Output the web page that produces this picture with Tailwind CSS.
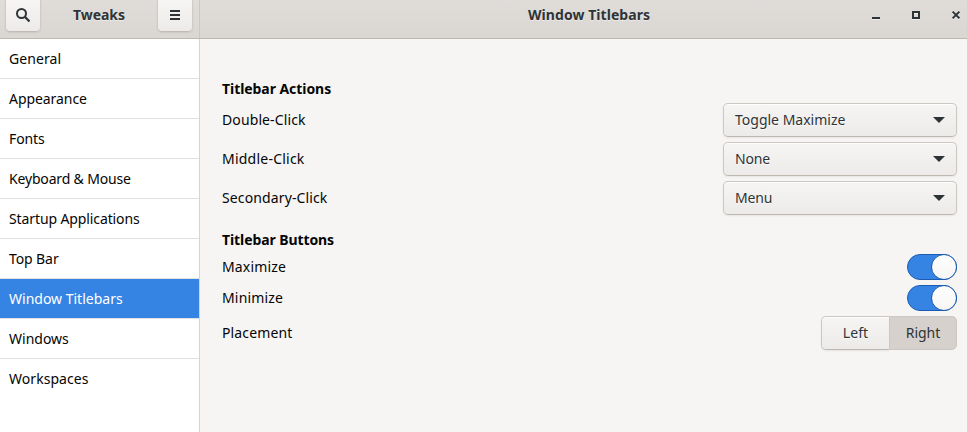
<!DOCTYPE html>
<html lang="en">
<head>
<meta charset="utf-8">
<title>Tweaks</title>
<script src="https://cdn.jsdelivr.net/npm/@tailwindcss/browser@4"></script>
</head>
<body class="w-[967px] h-[432px] overflow-hidden flex flex-col bg-[#f6f5f4] text-[14px] leading-5 text-[#050505] font-['Noto_Sans',sans-serif]">
<header class="flex h-[39px] shrink-0 border-b border-[#bfb8b1] bg-linear-to-b from-[#e0dcd9] to-[#dad6d2] text-[#2e3436] font-bold [text-shadow:0_1px_#ffffff80]">
  <div class="w-[200px] flex justify-between border-r border-[#cdc7c2] pl-[5px] pr-[6px]">
    <button class="-mt-[3px] w-[36px] h-[35px] rounded-[5px] border border-[#d0cbc7] border-b-[#c1bab4] bg-linear-to-b from-[#f7f6f5] to-[#edebe9] shadow-[0_1px_2px_#00000012] flex items-center justify-center">
      <svg class="mt-px" width="16" height="16" viewBox="0 0 16 16" fill="none" stroke="#2e3436" stroke-width="2"><circle cx="6.5" cy="6.5" r="4.5"/><path d="M9.8 9.8 14.5 14.5" stroke-width="2.3"/></svg>
    </button>
    <h1 class="mt-[5px] tracking-[-0.04px]">Tweaks</h1>
    <button class="-mt-[3px] w-[36px] h-[35px] rounded-[5px] border border-[#d0cbc7] border-b-[#c1bab4] bg-linear-to-b from-[#f7f6f5] to-[#edebe9] shadow-[0_1px_2px_#00000012] flex items-center justify-center">
      <svg class="mt-px" width="16" height="16" viewBox="0 0 16 16" fill="#2e3436" shape-rendering="crispEdges"><path d="M3 3h10v2H3zM3 7h10v2H3zM3 11h10v2H3z"/></svg>
    </button>
  </div>
  <div class="flex-1 flex">
    <h2 class="ml-[328px] mt-[5px] w-[336px] tracking-[0.06px] whitespace-nowrap">Window Titlebars</h2>
    <div class="mt-[7px] flex gap-6 [filter:drop-shadow(0_1px_0_#ffffff90)]">
      <svg width="16" height="16" viewBox="0 0 16 16" fill="#2e3436"><path d="M8 10h8v2H8z"/></svg>
      <svg width="16" height="16" viewBox="0 0 16 16" fill="none" stroke="#2e3436" stroke-width="2"><path d="M9 5h6v6H9z"/></svg>
      <svg width="16" height="16" viewBox="0 0 16 16" fill="none" stroke="#2e3436" stroke-width="2"><path d="M8.6 4.6 15.4 11.4M15.4 4.6 8.6 11.4"/></svg>
    </div>
  </div>
</header>
<div class="flex flex-1">
  <nav class="w-[200px] shrink-0 bg-white border-r border-[#d8d4d0] whitespace-nowrap *:h-10 *:pl-[9px] *:pt-[10px] *:border-b *:border-[#e1e1e1]">
    <div class="tracking-[0.08px]">General</div>
    <div class="tracking-[-0.06px]">Appearance</div>
    <div class="tracking-[-0.1px]">Fonts</div>
    <div class="tracking-[-0.17px]">Keyboard &amp; Mouse</div>
    <div class="tracking-[-0.11px]">Startup Applications</div>
    <div class="tracking-[-0.1px]">Top Bar</div>
    <div class="bg-[#3584e4] text-white">Window Titlebars</div>
    <div>Windows</div>
    <div class="tracking-[0.05px] border-b-0!">Workspaces</div>
  </nav>
  <main class="flex-1 pl-[22px] pr-[10px] pt-10">
    <h3 class="font-bold tracking-[-0.06px] h-6">Titlebar Actions</h3>
    <div class="flex flex-col gap-[5px]">
      <div class="flex justify-between h-[34px]">
        <span class="mt-[7px] tracking-[0.11px]">Double-Click</span>
        <button class="w-[234px] rounded-[5px] border border-[#cdc7c2] border-b-[#bfb8b1] bg-linear-to-b from-[#f6f5f4] to-[#edebe9] shadow-[inset_0_1px_#ffffffcc,0_1px_2px_#00000012] text-[#2e3436] [text-shadow:0_1px_#ffffffc4] flex items-center justify-between pl-[11px] pr-[11px]"><span>Toggle Maximize</span><svg width="12" height="6" viewBox="0 0 12 6" fill="#2e3436"><path d="M0 0h12L6 6z"/></svg></button>
      </div>
      <div class="flex justify-between h-[34px]">
        <span class="mt-[7px] tracking-[0.23px]">Middle-Click</span>
        <button class="w-[234px] rounded-[5px] border border-[#cdc7c2] border-b-[#bfb8b1] bg-linear-to-b from-[#f6f5f4] to-[#edebe9] shadow-[inset_0_1px_#ffffffcc,0_1px_2px_#00000012] text-[#2e3436] [text-shadow:0_1px_#ffffffc4] flex items-center justify-between pl-[11px] pr-[11px]"><span class="tracking-[-0.15px]">None</span><svg width="12" height="6" viewBox="0 0 12 6" fill="#2e3436"><path d="M0 0h12L6 6z"/></svg></button>
      </div>
      <div class="flex justify-between h-[34px]">
        <span class="mt-[7px] tracking-[0.12px]">Secondary-Click</span>
        <button class="w-[234px] rounded-[5px] border border-[#cdc7c2] border-b-[#bfb8b1] bg-linear-to-b from-[#f6f5f4] to-[#edebe9] shadow-[inset_0_1px_#ffffffcc,0_1px_2px_#00000012] text-[#2e3436] [text-shadow:0_1px_#ffffffc4] flex items-center justify-between pl-[11px] pr-[11px]"><span class="tracking-[-0.2px]">Menu</span><svg width="12" height="6" viewBox="0 0 12 6" fill="#2e3436"><path d="M0 0h12L6 6z"/></svg></button>
      </div>
    </div>
    <h3 class="font-bold tracking-[-0.09px] mt-[15px] h-6">Titlebar Buttons</h3>
    <div class="flex flex-col gap-[5px]">
      <div class="flex justify-between h-[26px]">
        <span class="mt-[3px] tracking-[0.16px]">Maximize</span>
        <div class="w-[50px] rounded-full border border-[#1b5cb0] bg-[#3584e4] flex justify-end"><div class="-m-px size-[26px] rounded-full border border-[#1b5cb0] bg-linear-to-b from-white to-[#f6f5f4]"></div></div>
      </div>
      <div class="flex justify-between h-[26px]">
        <span class="mt-[3px] tracking-[0.16px]">Minimize</span>
        <div class="w-[50px] rounded-full border border-[#1b5cb0] bg-[#3584e4] flex justify-end"><div class="-m-px size-[26px] rounded-full border border-[#1b5cb0] bg-linear-to-b from-white to-[#f6f5f4]"></div></div>
      </div>
      <div class="flex justify-between h-[34px]">
        <span class="mt-[7px] tracking-[0.14px]">Placement</span>
        <div class="flex w-[136px] text-[#2e3436]">
          <button class="w-[68px] rounded-l-[5px] border border-r-0 border-[#cdc7c2] border-b-[#bfb8b1] bg-linear-to-b from-[#f6f5f4] to-[#edebe9] shadow-[inset_0_1px_#ffffffcc,0_1px_2px_#00000012] tracking-[0.1px] [text-shadow:0_1px_#ffffffc4]">Left</button>
          <button class="w-[68px] rounded-r-[5px] border border-[#cdc7c2] bg-[#d6d1cd]">Right</button>
        </div>
      </div>
    </div>
  </main>
</div>
</body>
</html>
